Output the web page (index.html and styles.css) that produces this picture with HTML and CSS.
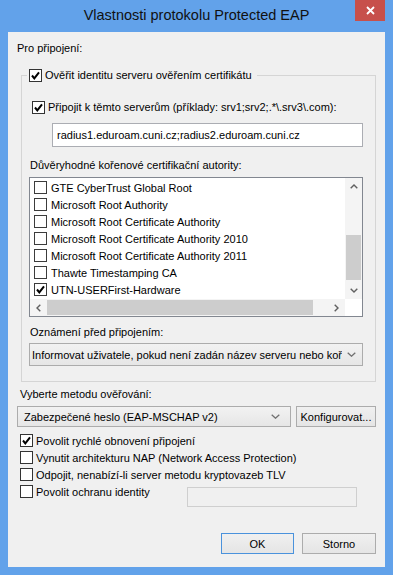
FILE: index.html
```html
<!DOCTYPE html>
<html lang="cs">
<head>
    <meta charset="UTF-8">
    <meta name="viewport" content="width=device-width, initial-scale=1.0">
    <title>Vlastnosti protokolu Protected EAP</title>
    <link rel="stylesheet" href="styles.css">
</head>
<body>
    <div class="window">
        <div class="titlebar">
            <div class="title">Vlastnosti protokolu Protected EAP</div>
            <div class="close-btn">
                <svg width="9" height="9" viewBox="0 0 9 9"><path d="M1 1 L8 8 M8 1 L1 8" stroke="#fff" stroke-width="1.8" fill="none"/></svg>
            </div>
        </div>

        <div class="client">
            <div class="caption">Pro připojení:</div>

            <fieldset class="group">
                <legend class="check">
                    <span class="box"><svg width="11" height="11" viewBox="0 0 11 11"><path d="M2 5.5 L4.3 8.3 L9 2.3" fill="none" stroke="#000" stroke-width="2"/></svg></span>Ověřit identitu serveru ověřením certifikátu
                </legend>

                <div class="check servers">
                    <span class="box"><svg width="11" height="11" viewBox="0 0 11 11"><path d="M2 5.5 L4.3 8.3 L9 2.3" fill="none" stroke="#000" stroke-width="2"/></svg></span>Připojit k těmto serverům (příklady: srv1;srv2;.*\.srv3\.com):
                </div>
                <div class="textbox">radius1.eduroam.cuni.cz;radius2.eduroam.cuni.cz</div>

                <div class="caption inner">Důvěryhodné kořenové certifikační autority:</div>
                <div class="listbox">
                    <div class="list-body">
                        <div class="items">
                            <div class="item"><span class="box"></span>GTE CyberTrust Global Root</div>
                            <div class="item"><span class="box"></span>Microsoft Root Authority</div>
                            <div class="item"><span class="box"></span>Microsoft Root Certificate Authority</div>
                            <div class="item"><span class="box"></span>Microsoft Root Certificate Authority 2010</div>
                            <div class="item"><span class="box"></span>Microsoft Root Certificate Authority 2011</div>
                            <div class="item"><span class="box"></span>Thawte Timestamping CA</div>
                            <div class="item"><span class="box"><svg width="11" height="11" viewBox="0 0 11 11"><path d="M2 5.5 L4.3 8.3 L9 2.3" fill="none" stroke="#000" stroke-width="2"/></svg></span>UTN-USERFirst-Hardware</div>
                        </div>
                        <div class="vscroll">
                            <div class="arrow"><svg width="8" height="5" viewBox="0 0 8 5"><path d="M0.7 4.3 L4 1 L7.3 4.3" fill="none" stroke="#606060" stroke-width="1.4"/></svg></div>
                            <div class="track"><div class="vthumb"></div></div>
                            <div class="arrow"><svg width="8" height="5" viewBox="0 0 8 5"><path d="M0.7 0.7 L4 4 L7.3 0.7" fill="none" stroke="#606060" stroke-width="1.4"/></svg></div>
                        </div>
                    </div>
                    <div class="hscroll">
                        <div class="arrow"><svg width="5" height="8" viewBox="0 0 5 8"><path d="M4.3 0.7 L1 4 L4.3 7.3" fill="none" stroke="#606060" stroke-width="1.4"/></svg></div>
                        <div class="track"><div class="hthumb"></div></div>
                        <div class="arrow"><svg width="5" height="8" viewBox="0 0 5 8"><path d="M0.7 0.7 L4 4 L0.7 7.3" fill="none" stroke="#606060" stroke-width="1.4"/></svg></div>
                        <div class="corner"></div>
                    </div>
                </div>

                <div class="caption inner notify">Oznámení před připojením:</div>
                <div class="combo notify-combo">
                    <span class="combo-text">Informovat uživatele, pokud není zadán název serveru nebo kořenová certifikační autorita</span>
                    <span class="combo-arrow"><svg width="9" height="5" viewBox="0 0 9 5"><path d="M0.7 0.7 L4.5 4.2 L8.3 0.7" fill="none" stroke="#707070" stroke-width="1.3"/></svg></span>
                </div>
            </fieldset>

            <div class="caption method">Vyberte metodu ověřování:</div>
            <div class="method-row">
                <div class="combo method-combo">
                    <span class="combo-text">Zabezpečené heslo (EAP-MSCHAP v2)</span>
                    <span class="combo-arrow"><svg width="9" height="5" viewBox="0 0 9 5"><path d="M0.7 0.7 L4.5 4.2 L8.3 0.7" fill="none" stroke="#707070" stroke-width="1.3"/></svg></span>
                </div>
                <div class="button config">Konfigurovat...</div>
            </div>

            <div class="options">
                <div class="check opt">
                    <span class="box"><svg width="11" height="11" viewBox="0 0 11 11"><path d="M2 5.5 L4.3 8.3 L9 2.3" fill="none" stroke="#000" stroke-width="2"/></svg></span>Povolit rychlé obnovení připojení
                </div>
                <div class="check opt"><span class="box"></span>Vynutit architekturu NAP (Network Access Protection)</div>
                <div class="check opt"><span class="box"></span>Odpojit, nenabízí-li server metodu kryptovazeb TLV</div>
                <div class="identity-row">
                    <div class="check opt"><span class="box"></span>Povolit ochranu identity</div>
                    <div class="identity-box"></div>
                </div>
            </div>

            <div class="buttons">
                <div class="button default">OK</div>
                <div class="button cancel">Storno</div>
            </div>
        </div>
    </div>
</body>
</html>
```

FILE: styles.css
```css
/* Base */
* {
    box-sizing: border-box;
}

body {
    margin: 0;
    background: #62a2ea;
    font-family: "Liberation Sans", Arial, sans-serif;
    font-size: 11px;
    line-height: 16px;
    color: #000;
}

.window {
    width: 393px;
    height: 575px;
}

/* Title bar */
.titlebar {
    position: relative;
    height: 32px;
    text-align: center;
}

.title {
    font-size: 14.5px;
    line-height: 30px;
    color: #111;
}

.close-btn {
    position: absolute;
    top: 0;
    right: 8px;
    width: 30px;
    height: 21px;
    background: #c7504b;
    display: flex;
    align-items: center;
    justify-content: center;
}

/* Client area */
.client {
    margin: 0 8px;
    height: 535px;
    background: #f0f0f0;
    padding: 8px 9px 0;
}

.caption {
    height: 16px;
    white-space: nowrap;
}

/* Checkboxes */
.check {
    display: flex;
    align-items: center;
    height: 16px;
    white-space: nowrap;
}

.box {
    flex: none;
    width: 13px;
    height: 13px;
    margin-right: 3px;
    border: 1px solid #333;
    background: #fff;
    display: flex;
    align-items: center;
    justify-content: center;
}

/* Group box */
.group {
    margin: 11px 0 0 4px;
    padding: 16px 12px 15px 5px;
    border: 1px solid #d5d5d5;
    min-width: 0;
}

.group legend {
    padding: 0 5px 0 2px;
}

.servers {
    margin-left: 5px;
}

.textbox {
    margin: 8px 0 0 25px;
    height: 24px;
    padding-left: 4px;
    line-height: 22px;
    border: 1px solid #abadb3;
    background: #fff;
    white-space: nowrap;
}

.caption.inner {
    margin: 10px 0 0 3px;
}

.caption.notify {
    margin-top: 7px;
}

/* List with scrollbars */
.listbox {
    margin: 4px 0 0 2px;
    height: 140px;
    border: 1px solid #828790;
    background: #fff;
    display: flex;
    flex-direction: column;
}

.list-body {
    height: 121px;
    display: flex;
}

.items {
    flex: 1;
    padding-top: 1px;
    overflow: hidden;
}

.item {
    display: flex;
    align-items: center;
    height: 17px;
    padding-left: 4px;
    white-space: nowrap;
}

.item .box {
    margin-right: 4px;
    border-color: #3c3c3c;
}

.vscroll {
    width: 17px;
    background: #f4f4f4;
    display: flex;
    flex-direction: column;
}

.arrow {
    flex: none;
    width: 17px;
    height: 17px;
    display: flex;
    align-items: center;
    justify-content: center;
}

.vscroll .track {
    flex: 1;
}

.vthumb {
    margin: 40px 1px 0;
    height: 45px;
    background: #cdcdcd;
}

.hscroll {
    height: 17px;
    background: #f4f4f4;
    display: flex;
}

.hscroll .track {
    flex: 1;
}

.hthumb {
    margin-top: 1px;
    width: 266px;
    height: 15px;
    background: #cdcdcd;
}

.corner {
    width: 17px;
    background: #fff;
}

/* Combo boxes */
.combo {
    display: flex;
    align-items: center;
    border: 1px solid #acacac;
    background: linear-gradient(#f2f2f2, #e6e6e6);
    white-space: nowrap;
}

.combo-text {
    flex: 1;
    overflow: hidden;
}

.combo-arrow {
    flex: none;
    width: 18px;
    display: flex;
    justify-content: center;
}

.notify-combo {
    margin: 3px 0 0 2px;
    height: 23px;
    padding-left: 2px;
}

.notify-combo .combo-arrow {
    margin-right: 2px;
}

.caption.method {
    margin: 4px 0 0 3px;
}

.method-row {
    margin-top: 4px;
    display: flex;
    gap: 5px;
}

.method-combo {
    width: 274px;
    height: 21px;
    padding-left: 6px;
}

.method-combo .combo-arrow {
    margin-right: 6px;
}

/* Buttons */
.button {
    height: 21px;
    border: 1px solid #acacac;
    background: linear-gradient(#f0f0f0, #e5e5e5);
    display: flex;
    align-items: center;
    justify-content: center;
    white-space: nowrap;
}

.config {
    flex: 1;
}

.button.default {
    width: 73px;
    border-color: #4a92dc;
}

.button.cancel {
    width: 74px;
}

/* Options */
.options {
    margin: 5px 0 0 3px;
}

.opt {
    height: 17px;
}

.identity-row {
    display: flex;
    align-items: flex-start;
}

.identity-box {
    margin: 4px 19px 0 auto;
    width: 170px;
    height: 20px;
    border: 1px solid #cfcfcf;
    background: #f0f0f0;
}

.buttons {
    margin-top: 26px;
    display: flex;
    justify-content: flex-end;
    gap: 8px;
}
```
